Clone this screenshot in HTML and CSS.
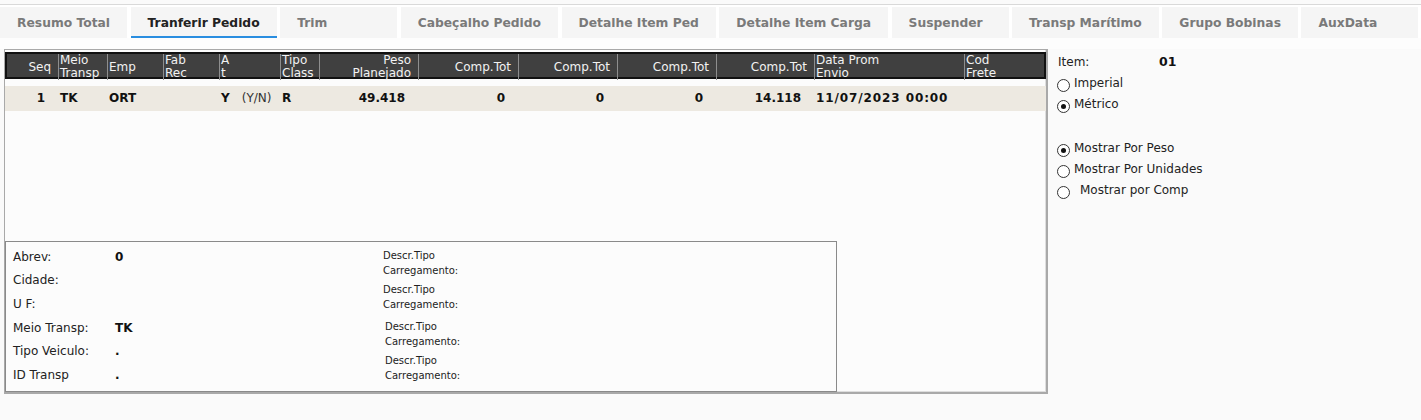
FILE: index.html
```html
<!DOCTYPE html>
<html lang="pt">
<head>
<meta charset="utf-8">
<title>Tranferir Pedido</title>
<link rel="stylesheet" href="styles.css">
</head>
<body>
<div class="topline"></div>
<nav class="tabs">
  <div class="tab">Resumo Total</div>
  <div class="tab active">Tranferir Pedido</div>
  <div class="tab">Trim</div>
  <div class="tab">Cabeçalho Pedido</div>
  <div class="tab">Detalhe Item Ped</div>
  <div class="tab">Detalhe Item Carga</div>
  <div class="tab">Suspender</div>
  <div class="tab">Transp Marítimo</div>
  <div class="tab">Grupo Bobinas</div>
  <div class="tab">AuxData</div>
</nav>
<main class="content">
  <section class="panel">
    <div class="grid-head">
      <div class="hc r">Seq</div>
      <div class="hc">Meio<br>Transp</div>
      <div class="hc">Emp</div>
      <div class="hc">Fab<br>Rec</div>
      <div class="hc">A<br>t</div>
      <div class="hc">Tipo<br>Class</div>
      <div class="hc r">Peso<br>Planejado</div>
      <div class="hc r">Comp.Tot</div>
      <div class="hc r">Comp.Tot</div>
      <div class="hc r">Comp.Tot</div>
      <div class="hc r">Comp.Tot</div>
      <div class="hc">Data Prom<br>Envio</div>
      <div class="hc">Cod<br>Frete</div>
    </div>
    <div class="grid-row">
      <div class="dc r">1</div>
      <div class="dc">TK</div>
      <div class="dc">ORT</div>
      <div class="dc"></div>
      <div class="dc">Y<span class="yn">(Y/N)</span></div>
      <div class="dc">R</div>
      <div class="dc r">49.418</div>
      <div class="dc r">0</div>
      <div class="dc r">0</div>
      <div class="dc r">0</div>
      <div class="dc r">14.118</div>
      <div class="dc date">11/07/2023 00:00</div>
      <div class="dc"></div>
    </div>
    <div class="info-box">
      <div class="info-left">
        <span class="lbl">Abrev:</span><span class="val">0</span>
        <span class="lbl">Cidade:</span><span class="val"></span>
        <span class="lbl">U F:</span><span class="val"></span>
        <span class="lbl">Meio Transp:</span><span class="val">TK</span>
        <span class="lbl">Tipo Veiculo:</span><span class="val">.</span>
        <span class="lbl">ID Transp</span><span class="val">.</span>
      </div>
      <div class="info-right">
        <div class="descr d1">Descr.Tipo<br>Carregamento:</div>
        <div class="descr d2">Descr.Tipo<br>Carregamento:</div>
        <div class="descr d3">Descr.Tipo<br>Carregamento:</div>
        <div class="descr d4">Descr.Tipo<br>Carregamento:</div>
      </div>
    </div>
  </section>
  <aside class="side">
    <div class="item-row"><span class="item-label">Item:</span><span class="item-val">01</span></div>
    <div class="opt"><span class="radio"></span><span>Imperial</span></div>
    <div class="opt"><span class="radio on"></span><span>Métrico</span></div>
    <div class="opt-gap"></div>
    <div class="opt"><span class="radio on"></span><span>Mostrar Por Peso</span></div>
    <div class="opt"><span class="radio"></span><span>Mostrar Por Unidades</span></div>
    <div class="opt"><span class="radio"></span><span class="wide">Mostrar por Comp</span></div>
  </aside>
</main>
</body>
</html>
```
FILE: styles.css
```css
* { box-sizing: border-box; }

body {
  margin: 0;
  background: #fafafa;
  font-family: "DejaVu Sans", Verdana, sans-serif;
  font-size: 12px;
  color: #222;
  overflow: hidden;
}

.topline {
  height: 5px;
  border-bottom: 1px solid #d9d9d9;
  background: #fafafa;
}

.tabs {
  display: flex;
  gap: 3.5px;
  padding-top: 2px;
  background: #ffffff;
  overflow: hidden;
}

.tab {
  flex: none;
  height: 31px;
  min-width: 117px;
  padding: 1px 17px 0;
  display: flex;
  align-items: center;
  background: #f5f5f5;
  color: #7a7a7a;
  font-weight: bold;
  font-size: 12.3px;
  white-space: nowrap;
}

.tab.active {
  color: #222;
  box-shadow: inset 0 -2px 0 #2a8ee0;
}

.content {
  display: flex;
  align-items: flex-start;
  padding: 11px 0 0 4px;
  background: linear-gradient(#fdfdfd, #fdfdfd) no-repeat 0 0 / 100% 11px, #fafafa;
}

.panel {
  flex: none;
  width: 1044px;
  height: 345px;
  border: 1px solid #a9a9a9;
  border-right-width: 2px;
  border-bottom-width: 2px;
  box-shadow: inset -1px -1px 0 #dedede;
  padding-top: 2px;
  display: flex;
  flex-direction: column;
  background: #fcfcfc;
}

.grid-head,
.grid-row {
  display: grid;
  grid-template-columns: 51px 49px 56px 56px 61px 39px 99px 100px 99px 99px 98px 150px 1fr;
}

.grid-head {
  height: 27px;
  background: #404040;
  border: 2px solid #111;
  color: #f2f2f2;
}

.hc {
  display: flex;
  flex-direction: column;
  justify-content: center;
  line-height: 13px;
  padding-left: 1px;
  white-space: nowrap;
  overflow: visible;
}

.hc + .hc {
  border-left: 1px solid #8e8e8e;
}

.hc.r {
  text-align: right;
  padding-right: 7px;
}

.grid-row {
  margin-top: 7px;
  height: 25px;
  padding: 0 2px;
  background: #ede9e1;
  font-weight: bold;
  color: #111;
}

.dc {
  display: flex;
  align-items: center;
  padding-left: 2px;
  padding-bottom: 2px;
  white-space: nowrap;
}

.dc.r {
  justify-content: flex-end;
  padding-right: 13px;
}

.dc.date {
  letter-spacing: 0.9px;
}

.yn {
  font-weight: normal;
  color: #333;
  margin-left: 12px;
}

.info-box {
  margin-top: auto;
  width: 832px;
  height: 151px;
  border: 1px solid #8a8a8a;
  display: flex;
  padding-left: 7px;
}

.info-left {
  width: 370px;
  padding-top: 3px;
  display: grid;
  grid-template-columns: 102px 1fr;
  grid-auto-rows: 23.6px;
  align-items: center;
  line-height: 16px;
}

.val {
  font-weight: bold;
  color: #111;
}

.info-right {
  padding-top: 6px;
  display: flex;
  flex-direction: column;
}

.descr {
  font-size: 10px;
  line-height: 15px;
  color: #222;
}

.d2 { margin-top: 4px; }
.d3 { margin-top: 7px; padding-left: 2px; }
.d4 { margin-top: 4px; padding-left: 2px; }

.side {
  margin-left: 10px;
  padding-top: 5px;
  line-height: 16px;
}

.item-row {
  display: flex;
  height: 21px;
}

.item-label {
  width: 101px;
}

.item-val {
  font-weight: bold;
  font-size: 12.5px;
  color: #111;
}

.opt {
  display: flex;
  align-items: flex-start;
  height: 21px;
}

.opt-gap {
  height: 23px;
}

.radio {
  flex: none;
  position: relative;
  width: 13px;
  height: 13px;
  margin-top: 4px;
  margin-right: 4px;
  margin-left: -1px;
  border: 1px solid #333;
  border-radius: 50%;
  background: #fff;
}

.radio.on::after {
  content: "";
  position: absolute;
  left: 3px;
  top: 3px;
  width: 5px;
  height: 5px;
  border-radius: 50%;
  background: #111;
}

.wide {
  padding-left: 6px;
}
```
